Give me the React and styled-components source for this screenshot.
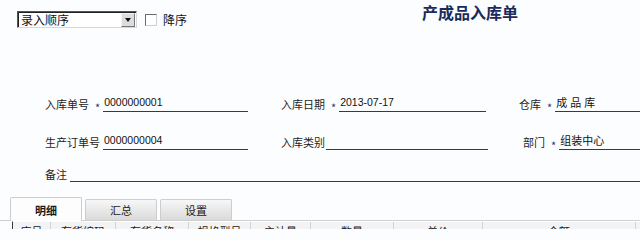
import styled, { createGlobalStyle } from "styled-components";

const GlobalStyle = createGlobalStyle`
  html, body {
    margin: 0;
    padding: 0;
    background: #fcfdfe;
  }
  body {
    font-family: "Noto Sans CJK SC", "Liberation Sans", sans-serif;
    color: #1e1e1e;
    overflow: hidden;
  }
`;

const Page = styled.div`
  width: 640px;
  height: 229px;
  overflow: hidden;
`;

const Header = styled.div`
  display: flex;
  align-items: flex-start;
  height: 95px;
  padding-left: 17px;
  box-sizing: border-box;
`;

const Toolbar = styled.div`
  display: flex;
  align-items: center;
  margin-top: 11px;
`;

const Select = styled.div`
  width: 120px;
  height: 17px;
  box-sizing: border-box;
  display: flex;
  align-items: center;
  background: #fff;
  border-top: 1px solid #555;
  border-left: 1px solid #555;
  border-right: 1px solid #d8d8d8;
  border-bottom: 1px solid #d8d8d8;
  box-shadow: inset 1px 1px 0 #222;
`;

const SelectText = styled.span`
  flex: 1;
  font-size: 12px;
  line-height: 15px;
  padding-left: 3px;
  color: #111;
`;

const SelectArrow = styled.span`
  width: 14px;
  height: 14px;
  margin-right: 1px;
  box-sizing: border-box;
  background: #dcdcdc;
  border: 1px solid;
  border-color: #f4f4f4 #777 #777 #f4f4f4;
  display: flex;
  align-items: center;
  justify-content: center;
  &::after {
    content: "";
    border-left: 3.5px solid transparent;
    border-right: 3.5px solid transparent;
    border-top: 4px solid #111;
  }
`;

const CheckBox = styled.span`
  width: 10px;
  height: 10px;
  margin-left: 8px;
  background: #fff;
  border: 1px solid;
  border-color: #6a6a6a #cfcfcf #cfcfcf #6a6a6a;
`;

const CheckLabel = styled.span`
  margin-left: 6px;
  font-size: 12px;
  color: #111;
`;

const Title = styled.h1`
  margin: 2px 0 0 235px;
  font-size: 16px;
  line-height: 20px;
  font-weight: 700;
  color: #1b2a5c;
`;

const FormRow = styled.div`
  display: grid;
  grid-template-columns: ${(p) => p.$cols || "236px 238px 1fr"};
  padding-left: 45px;
  margin-top: ${(p) => p.$mt || 0}px;
  height: 17px;
`;

const Field = styled.div`
  display: flex;
  align-items: flex-end;
  width: ${(p) => p.$w || "100%"};
  padding-left: ${(p) => p.$pl || 0}px;
  box-sizing: border-box;
`;

const Label = styled.span`
  font-size: 11px;
  line-height: 16px;
  color: #1e1e1e;
  white-space: nowrap;
`;

const Star = styled.span`
  font-size: 11px;
  line-height: 16px;
  color: #2a3a6a;
  margin: 0 3px 0 6px;
  transform: translateY(3px);
`;

const Value = styled.div`
  flex: 1;
  height: 16px;
  margin-left: ${(p) => p.$ml || 0}px;
  border-bottom: 1px solid #3a3a3a;
  line-height: 14px;
  padding-left: 1px;
  color: #111;
  white-space: nowrap;
  letter-spacing: ${(p) => p.$ls || "0"};
  font-family: ${(p) =>
    p.$num ? '"Liberation Sans", sans-serif' : '"Noto Sans CJK SC", sans-serif'};
  font-size: ${(p) => (p.$num ? "10.5px" : "11px")};
`;

const TabBar = styled.div`
  display: flex;
  align-items: flex-end;
  gap: 3px;
  margin-top: 14px;
  padding-left: 10px;
  height: 24px;
  border-bottom: 1px solid #cfcfcf;
`;

const Tab = styled.div`
  width: 72px;
  height: ${(p) => (p.$active ? 24 : 21)}px;
  box-sizing: border-box;
  display: flex;
  align-items: center;
  justify-content: center;
  font-size: 11px;
  font-weight: ${(p) => (p.$active ? 700 : 400)};
  color: #1a1a1a;
  border: 1px solid #cdcdcd;
  border-bottom: none;
  border-radius: 2px 2px 0 0;
  margin-bottom: ${(p) => (p.$active ? -1 : 0)}px;
  background: ${(p) =>
    p.$active ? "#fdfdfd" : "linear-gradient(#f7f7f7, #dadada)"};
`;

const TableHead = styled.div`
  display: grid;
  grid-template-columns: 38px 65px 73px 62px 60px 83px 89px 153px;
  margin-left: 12px;
  border-left: 1px solid #3a3a3a;
  background: #f3f3f3;
  border-top: 1px solid #fff;
  height: 20px;
`;

const HeadCell = styled.div`
  border-right: 1px solid #d2d2d2;
  font-size: 11px;
  line-height: 14px;
  padding-top: 2px;
  text-align: center;
  color: #1a1a1a;
`;

const columns = [
  "序号",
  "存货编码",
  "存货名称",
  "规格型号",
  "主计量",
  "数量",
  "单价",
  "金额",
];

export default function App() {
  return (
    <Page>
      <GlobalStyle />
      <Header>
        <Toolbar>
          <Select>
            <SelectText>录入顺序</SelectText>
            <SelectArrow />
          </Select>
          <CheckBox />
          <CheckLabel>降序</CheckLabel>
        </Toolbar>
        <Title>产成品入库单</Title>
      </Header>

      <FormRow>
        <Field $w="203px">
          <Label>入库单号</Label>
          <Star>*</Star>
          <Value $num>0000000001</Value>
        </Field>
        <Field $w="205px">
          <Label>入库日期</Label>
          <Star>*</Star>
          <Value $num>2013-07-17</Value>
        </Field>
        <Field>
          <Label>仓库</Label>
          <Star>*</Star>
          <Value $ls="3px">成品库</Value>
        </Field>
      </FormRow>

      <FormRow $mt={21}>
        <Field $w="203px">
          <Label>生产订单号</Label>
          <Value $num $ml={3}>0000000004</Value>
        </Field>
        <Field $w="207px">
          <Label>入库类别</Label>
          <Value $ml={1} />
        </Field>
        <Field $pl={4}>
          <Label>部门</Label>
          <Star>*</Star>
          <Value>组装中心</Value>
        </Field>
      </FormRow>

      <FormRow $mt={15} $cols="1fr">
        <Field>
          <Label>备注</Label>
          <Value $ml={3} />
        </Field>
      </FormRow>

      <TabBar>
        <Tab $active>明细</Tab>
        <Tab>汇总</Tab>
        <Tab>设置</Tab>
      </TabBar>

      <TableHead>
        {columns.map((c) => (
          <HeadCell key={c}>{c}</HeadCell>
        ))}
      </TableHead>
    </Page>
  );
}
